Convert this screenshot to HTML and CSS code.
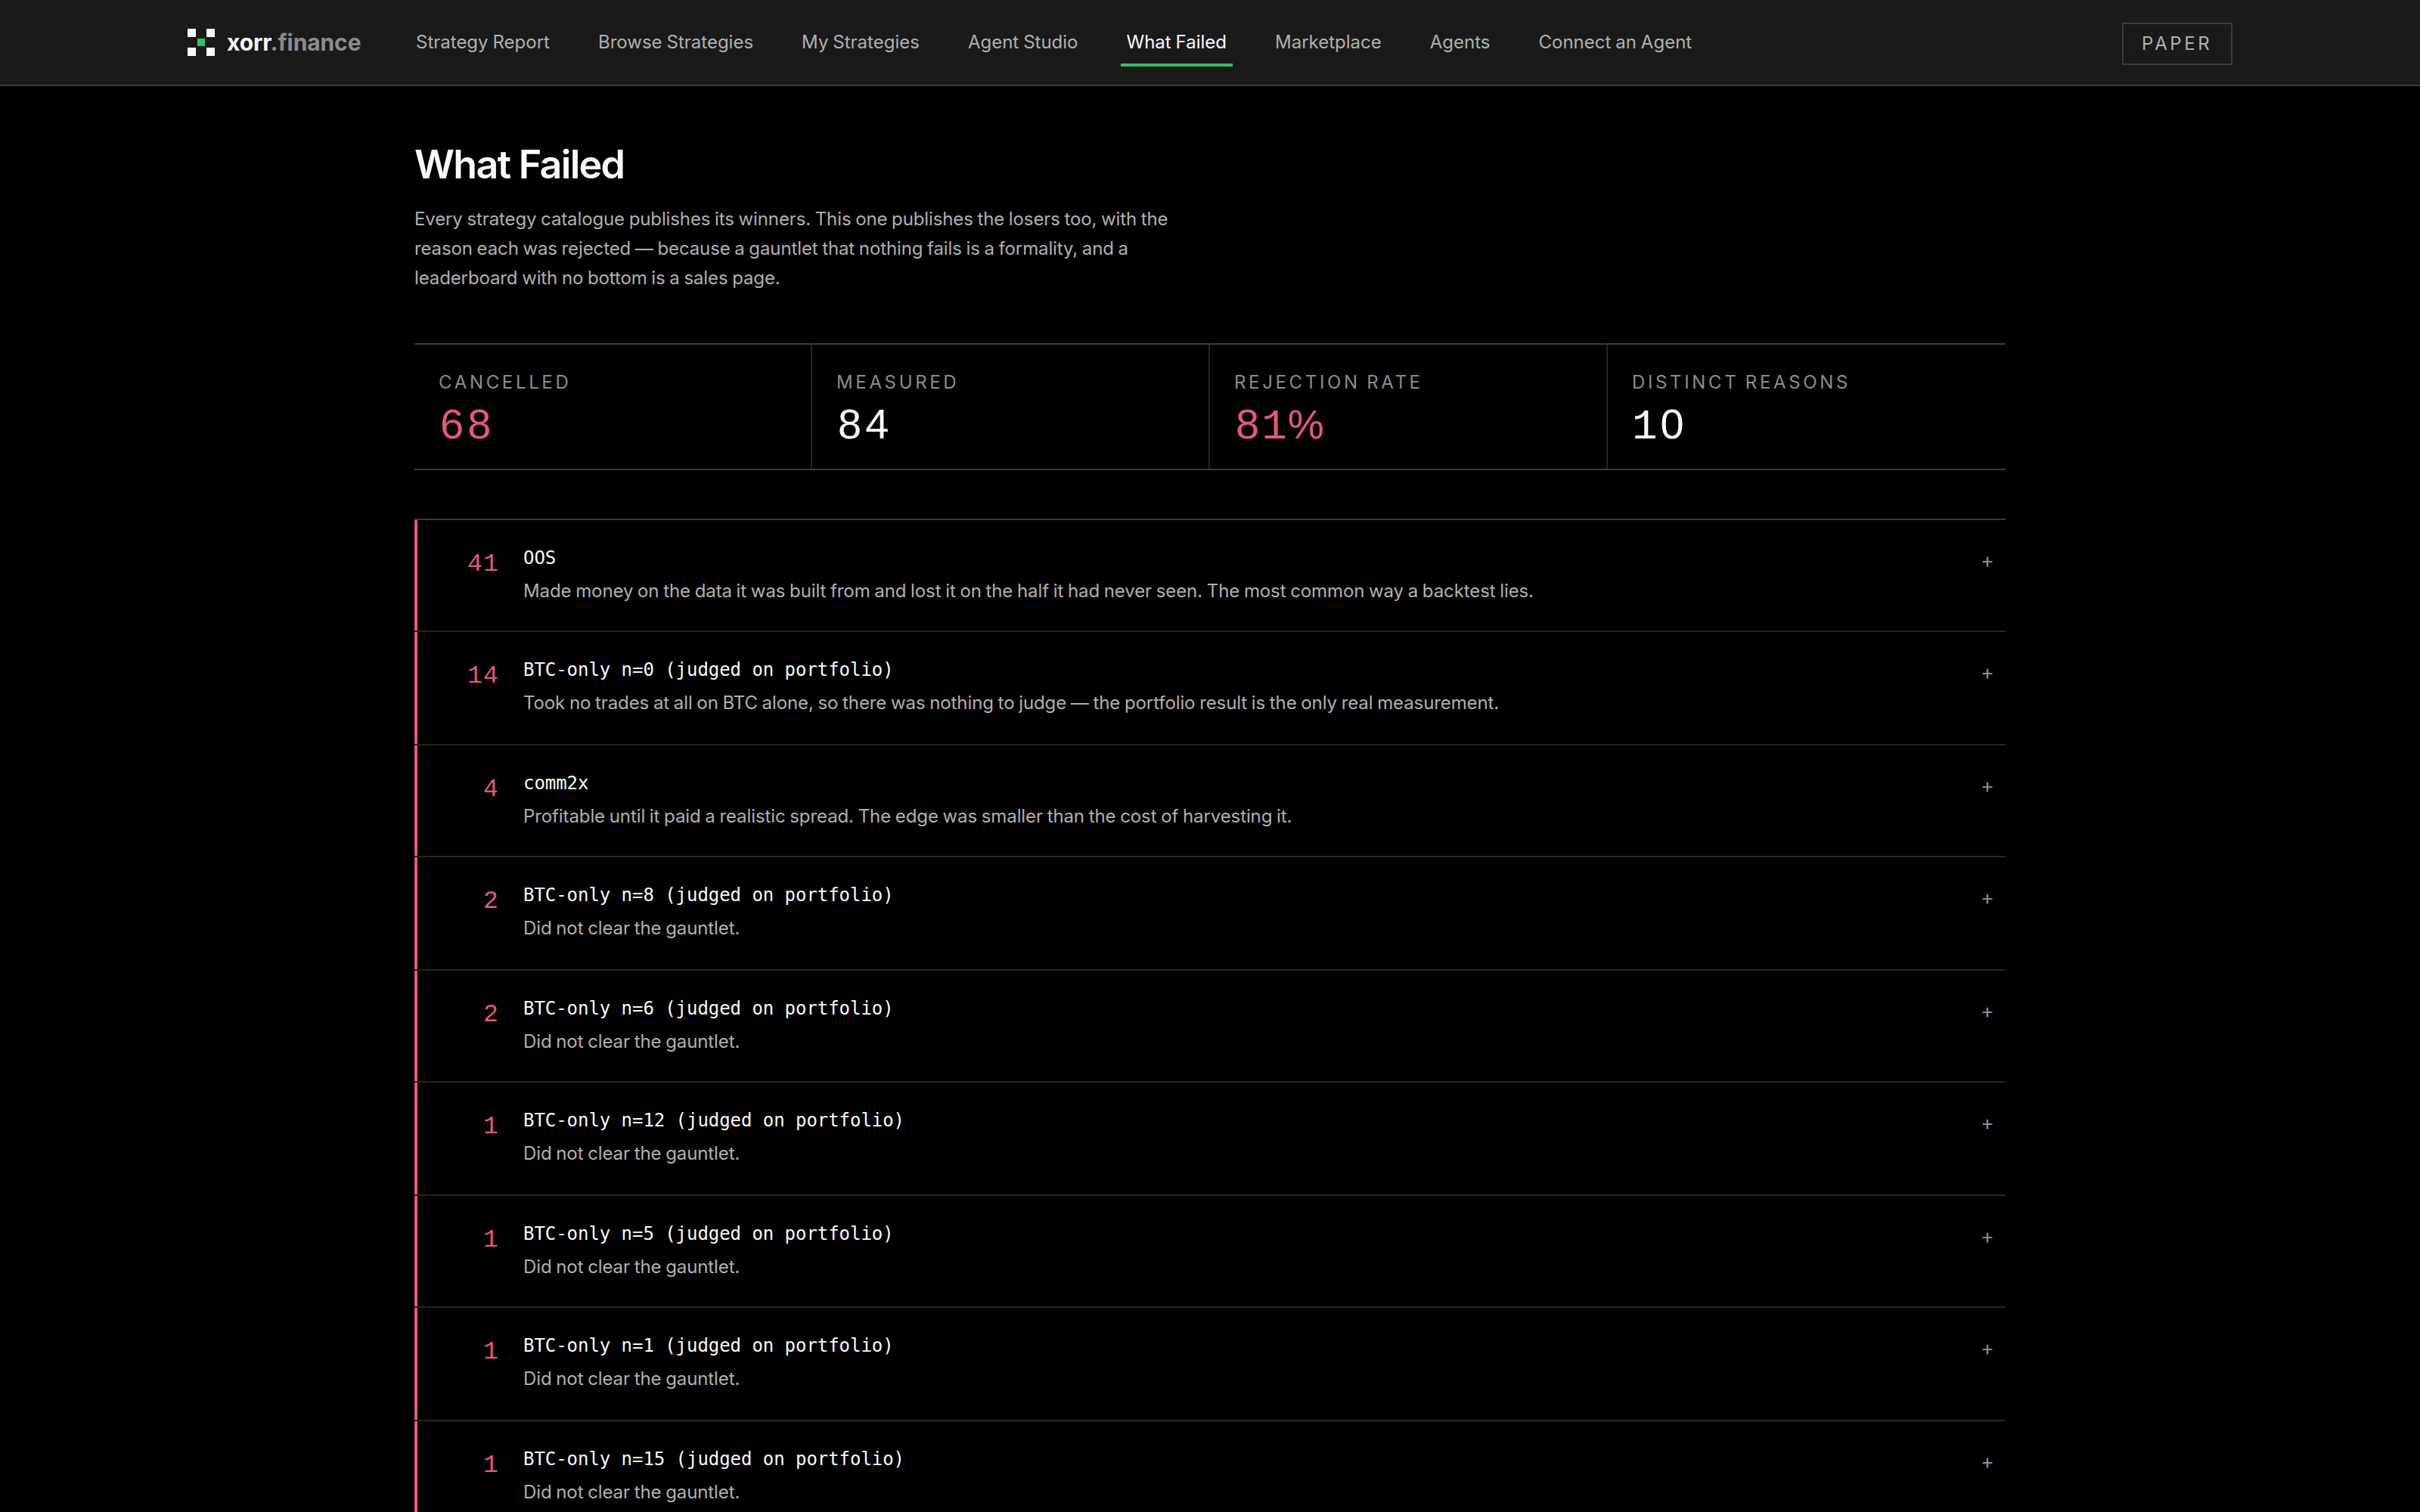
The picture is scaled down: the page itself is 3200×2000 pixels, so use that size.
FILE: index.html
```
<!DOCTYPE html>
<html lang="en">
<head>
  <meta charset="UTF-8">
  <meta name="viewport" content="width=device-width, initial-scale=1.0">
  <title>What Failed - xorr.finance</title>
  <link rel="stylesheet" href="styles.css">
</head>
<body>

  <header class="topbar">
    <a class="brand" href="#">
      <svg class="logo" viewBox="0 0 36 36" width="36" height="36">
        <path fill="#fafafa" d="M0 0h11v11H0zM25 0h11v11H25zM0 25h11v11H0zM25 25h11v11H25z"/>
        <path fill="#34c06a" d="M13 13h10v10H13z"/>
      </svg>
      <span class="brand-name">xorr<span class="brand-tld">.finance</span></span>
    </a>
    <nav class="nav">
      <a href="#">Strategy Report</a>
      <a href="#">Browse Strategies</a>
      <a href="#">My Strategies</a>
      <a href="#">Agent Studio</a>
      <a href="#" class="active">What Failed</a>
      <a href="#">Marketplace</a>
      <a href="#">Agents</a>
      <a href="#">Connect an Agent</a>
    </nav>
    <span class="mode">PAPER</span>
  </header>

  <main class="container">
    <h1>What Failed</h1>
    <p class="intro">Every strategy catalogue publishes its winners. This one publishes the losers too, with the<br>reason each was rejected — because a gauntlet that nothing fails is a formality, and a<br>leaderboard with no bottom is a sales page.</p>

    <section class="stats">
      <div class="stat"><span class="label">CANCELLED</span><span class="value bad">68</span></div>
      <div class="stat"><span class="label">MEASURED</span><span class="value">84</span></div>
      <div class="stat"><span class="label">REJECTION RATE</span><span class="value bad">8<span class="one">1</span><span class="pct">%</span></span></div>
      <div class="stat"><span class="label">DISTINCT REASONS</span><span class="value"><span class="one">1</span>0</span></div>
    </section>

    <div class="reasons" id="reasons"></div>
  </main>

  <script src="script.js"></script>
</body>
</html>
```
FILE: styles.css
```
* {
  box-sizing: border-box;
}
body {
  margin: 0;
  height: 2000px;
  overflow: hidden;
  background: #000;
  color: #fafafa;
  font-family: Inter, sans-serif;
  font-size: 24px;
}
a {
  color: inherit;
  text-decoration: none;
}
.topbar {
  display: flex;
  align-items: center;
  height: 114px;
  padding: 0 248px;
  background: #1a1a1a;
  border-bottom: 2px solid #3a3a3a;
}
.brand {
  display: flex;
  align-items: center;
  gap: 16px;
  width: 294px;
}
.logo {
  display: block;
}
.brand-name {
  font-size: 30px;
  font-weight: 700;
  letter-spacing: -0.1px;
}
.brand-tld {
  color: #8c8c8c;
}
.nav {
  display: flex;
  gap: 48px;
}
.nav a {
  padding: 15px 8px 11px;
  border-bottom: 4px solid transparent;
  line-height: 34px;
  word-spacing: -0.8px;
  color: #b0b0b0;
  white-space: nowrap;
}
.nav .active {
  color: #fafafa;
  border-color: #34c06a;
}
.mode {
  margin: 4px 0 0 auto;
  width: 146px;
  height: 56px;
  padding-left: 24px;
  border: 2px solid #3a3a3a;
  line-height: 52px;
  letter-spacing: 3.6px;
  color: #b0b0b0;
}
.container {
  width: 2104px;
  margin: 0 auto;
  padding-top: 72px;
}
h1 {
  margin: 0;
  font-size: 52px;
  font-weight: 600;
  line-height: 64px;
  letter-spacing: -1.7px;
}
.intro {
  margin: 20px 0 0;
  line-height: 39px;
  letter-spacing: -0.12px;
  word-spacing: -0.9px;
  color: #b0b0b0;
}
.stats {
  display: grid;
  grid-template-columns: repeat(4, 1fr);
  height: 168px;
  margin-top: 67px;
  border-top: 2px solid #3a3a3a;
  border-bottom: 2px solid #3a3a3a;
}
.stat {
  display: flex;
  flex-direction: column;
  padding: 32px 32px 0;
  border-right: 2px solid #262626;
}
.stat:last-child {
  border-right: none;
}
.label {
  line-height: 36px;
  letter-spacing: 3.65px;
  word-spacing: -2px;
  color: #8c8c8c;
}
.value {
  padding-left: 2px;
  font-family: "Liberation Sans", Arial, sans-serif;
  font-size: 56px;
  line-height: 74px;
  letter-spacing: 5px;
}
.bad {
  color: #e05a78;
}
.one {
  margin-left: -2px;
  font-family: "Liberation Mono", monospace;
  letter-spacing: 4px;
}
.pct {
  margin-left: -3px;
  font-size: 54px;
}
.reasons {
  margin-top: 64px;
  border-top: 2px solid #3a3a3a;
}
.reason {
  display: grid;
  grid-template-columns: 108px 1fr 33px;
  column-gap: 32px;
  height: 148px;
  padding-left: 4px;
  border-bottom: 2px solid #262626;
  box-shadow: inset 4px 0 0 #e05a78;
}
.reason:nth-child(even) {
  height: 150px;
}
.count {
  padding-top: 39px;
  text-align: right;
  font-family: "Liberation Mono", monospace;
  font-size: 33px;
  line-height: 40px;
  letter-spacing: 1.2px;
  color: #e05a78;
}
.code {
  padding-top: 32px;
  font-family: "DejaVu Sans Mono", monospace;
  font-size: 24px;
  line-height: 36px;
  letter-spacing: -0.05px;
}
.note {
  padding-top: 8px;
  line-height: 36px;
  letter-spacing: -0.1px;
  word-spacing: -0.9px;
  color: #b0b0b0;
}
.toggle {
  padding-top: 36px;
  font-size: 27px;
  line-height: 36px;
  color: #8c8c8c;
}
```
FILE: script.js
```
const reasons = [
  [41, "OOS", "Made money on the data it was built from and lost it on the half it had never seen. The most common way a backtest lies."],
  [14, "BTC-only n=0 (judged on portfolio)", "Took no trades at all on BTC alone, so there was nothing to judge — the portfolio result is the only real measurement."],
  [4, "comm2x", "Profitable until it paid a realistic spread. The edge was smaller than the cost of harvesting it."],
  [2, "BTC-only n=8 (judged on portfolio)", "Did not clear the gauntlet."],
  [2, "BTC-only n=6 (judged on portfolio)", "Did not clear the gauntlet."],
  [1, "BTC-only n=12 (judged on portfolio)", "Did not clear the gauntlet."],
  [1, "BTC-only n=5 (judged on portfolio)", "Did not clear the gauntlet."],
  [1, "BTC-only n=1 (judged on portfolio)", "Did not clear the gauntlet."],
  [1, "BTC-only n=15 (judged on portfolio)", "Did not clear the gauntlet."]
];

document.getElementById("reasons").innerHTML = reasons.map(([count, code, note]) => `
  <div class="reason">
    <div class="count">${count}</div>
    <div><div class="code">${code}</div><div class="note">${note}</div></div>
    <div class="toggle">+</div>
  </div>`).join("");
```
